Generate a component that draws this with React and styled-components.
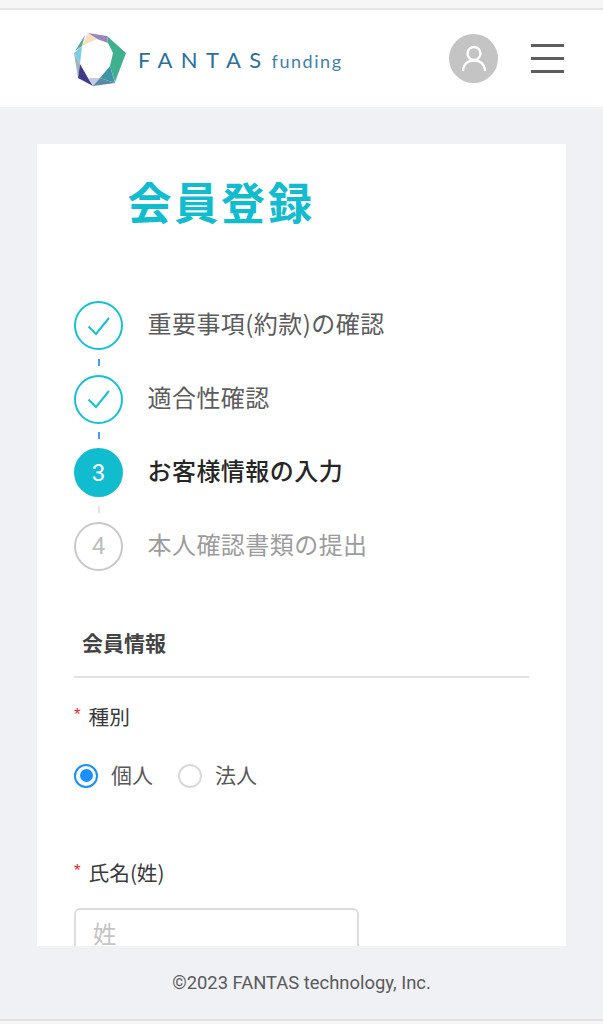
import React from 'react';
import styled, { createGlobalStyle } from 'styled-components';

const Global = createGlobalStyle`
  html, body { margin: 0; padding: 0; background: #eff1f5; }
  * { box-sizing: border-box; }
  body { font-family: "Noto Sans CJK JP", "Noto Sans", sans-serif; }
`;

const Page = styled.div`
  width: 603px; height: 1024px; overflow: hidden;
  display: flex; flex-direction: column; background: #eff1f5;
`;
const BrowserStrip = styled.div`
  height: 10px; flex: none; background: #f6f6f6; border-bottom: 2px solid #e4e4e4;
`;
const Header = styled.header`
  height: 97px; flex: none; background: #fff;
  display: flex; align-items: center; padding: 0 39px 0 72px;
`;
const Logo = styled.div`display: flex; align-items: center; flex: 1;`;
const Wordmark = styled.span`
  margin-left: 10px; margin-top: 2px; color: #2b709c; font-family: Lato, sans-serif;
  font-size: 22px; letter-spacing: 8.4px; font-weight: 400; white-space: nowrap;
`;
const Sub = styled.span`
  margin-left: 2px; margin-top: 4px; color: #3f82a8; font-family: Lato, sans-serif;
  font-size: 18px; letter-spacing: 1.55px; white-space: nowrap;
`;
const Avatar = styled.div`
  width: 49px; height: 49px; border-radius: 50%; background: #c4c4c4;
  display: flex; align-items: center; justify-content: center; margin-right: 33px;
`;
const Burger = styled.div`
  width: 33px; display: flex; flex-direction: column; gap: 10px;
`;
const BurgerLine = styled.span`height: 3px; background: #5e5e5e; display: block;`;

const Main = styled.main`flex: none; padding: 37px 37px 0; display: flex;`;
const Card = styled.section`
  width: 529px; height: 802px; background: #fff; overflow: hidden; padding: 0 37px 0 37px;
`;
const Title = styled.h1`
  margin: 29px 0 0 53.5px; color: #12bccf; font-size: 44px; font-weight: 700; line-height: 56px;
  letter-spacing: 2.8px;
`;
const Steps = styled.ol`list-style: none; margin: 72px 0 0; padding: 0; display: flex; flex-direction: column; gap: 24.67px;`;
const Step = styled.li`
  display: flex; align-items: center; gap: 24.5px; height: 49px; position: relative;
`;
const Connector = styled.span`
  position: absolute; left: 24px; top: -16px; width: 2px; height: 7px;
  background: ${p => p.$color};
`;
const Circle = styled.div`
  width: 49px; height: 49px; border-radius: 50%; flex: none;
  display: flex; align-items: center; justify-content: center;
  font-family: Roboto, sans-serif; font-size: 24px;
  border: ${p => p.$variant === 'todo' ? '2px solid #c9c9c9' : p.$variant === 'done' ? '2px solid #17c0d3' : 'none'};
  background: ${p => p.$variant === 'current' ? '#12bccf' : '#fff'};
  color: ${p => p.$variant === 'current' ? '#fff' : '#bdbdbd'};
`;
const StepLabel = styled.span`
  font-size: 24px; letter-spacing: 0.45px; line-height: 32px; white-space: nowrap; margin-bottom: 5px;
  color: ${p => p.$variant === 'current' ? '#262626' : p.$variant === 'todo' ? '#9c9c9c' : '#5c5c5c'};
  font-weight: ${p => p.$variant === 'current' ? 500 : 400};
`;
const SectionHead = styled.h2`
  margin: 56px 0 0; padding: 0 0 19px 8px; border-bottom: 2px solid #e2e2e2;
  font-size: 21px; line-height: 30px; font-weight: 700; color: #444;
`;
const FieldLabel = styled.div`
  display: flex; align-items: center; font-size: 20.7px; line-height: 30px; color: #3a3a3a;
  margin-top: ${p => p.$top}px;
`;
const Req = styled.span`
  color: #f5222d; width: 14.5px; font-size: 17px; font-family: "Liberation Sans", sans-serif; line-height: 1;
  position: relative; top: -1px;
`;
const Radios = styled.div`display: flex; align-items: center; margin-top: 30px; height: 30px;`;
const RadioItem = styled.label`display: inline-flex; align-items: center; margin-right: 25px;`;
const RadioDot = styled.span`
  width: 24px; height: 24px; border-radius: 50%; flex: none; background: #fff;
  border: 2px solid ${p => p.$on ? '#1890ff' : '#d9d9d9'};
  display: flex; align-items: center; justify-content: center;
  &::after {
    content: ''; width: 13px; height: 13px; border-radius: 50%;
    background: ${p => p.$on ? '#1890ff' : 'transparent'};
  }
`;
const RadioText = styled.span`margin: 0 0 3px 13px; font-size: 21px; line-height: 30px; color: #585858;`;
const TextBox = styled.div`
  width: 285px; height: 54px; margin-top: 21px; border: 2px solid #dcdcdc; border-radius: 6px;
  padding: 6px 17px; font-size: 23.5px; line-height: 34px; color: #c4c4c4;
`;
const Footer = styled.footer`
  height: 75px; flex: none; border-bottom: 2px solid #e0e0e0; text-align: center;
  font-family: Roboto, sans-serif; font-size: 18.4px; color: #5a5a5a; padding-top: 25px; line-height: 24px;
`;
const BottomStrip = styled.div`flex: 1; background: #f6f6f6;`;

const Check = () => (
  <svg width="26" height="26" viewBox="0 0 26 26" fill="none" stroke="#17c0d3" strokeWidth="2">
    <path d="M2.5 13.5 L10 21 L23 5" />
  </svg>
);

const FantasMark = () => (
  <svg width="56" height="56" viewBox="72 30 56 56">
    <path d="M107 35L126 52L115 81L110 65L113 52L108 42Z" fill="#3fb08e" />
    <path d="M88 32L107 35L108 42L97 38Z" fill="#9b85bd" />
    <path d="M88 32L97 38L82 45Z" fill="#f8dfc0" />
    <path d="M85 34L82 45L75 50Z" fill="#5da79f" />
    <path d="M74 52L82 45L80 63Z" fill="#79cde2" />
    <path d="M74 52L80 63L78 77Z" fill="#9fb4bd" />
    <path d="M80 63L88 77L93 85L78 77Z" fill="#3f3a8c" />
    <path d="M88 77L100 77L93 85Z" fill="#c4cbe2" />
    <path d="M93 85L100 77L115 82Z" fill="#5b8aa8" />
    <path d="M100 77L110 65L115 82Z" fill="#3e95a5" />
  </svg>
);

const UserIcon = () => (
  <svg width="26" height="28" viewBox="0 0 26 28" fill="none" stroke="#fff" strokeWidth="2.4" strokeLinecap="round">
    <circle cx="13" cy="8.5" r="6.5" />
    <path d="M2 25 C3 18 8 15.5 13 15.5 C18 15.5 23 18 24 25" />
  </svg>
);

const steps = [
  { variant: 'done', text: '重要事項(約款)の確認' },
  { variant: 'done', text: '適合性確認', line: '#4a9cf0' },
  { variant: 'current', text: 'お客様情報の入力', mark: '3', line: '#4a9cf0' },
  { variant: 'todo', text: '本人確認書類の提出', mark: '4', line: '#e4e4e4' },
];

export default function App() {
  return (
    <Page>
      <Global />
      <BrowserStrip />
      <Header>
        <Logo>
          <FantasMark />
          <Wordmark>FANTAS</Wordmark>
          <Sub>funding</Sub>
        </Logo>
        <Avatar><UserIcon /></Avatar>
        <Burger><BurgerLine /><BurgerLine /><BurgerLine /></Burger>
      </Header>
      <Main>
        <Card>
          <Title>会員登録</Title>
          <Steps>
            {steps.map(s => (
              <Step key={s.text}>
                {s.line && <Connector $color={s.line} />}
                <Circle $variant={s.variant}>{s.mark || <Check />}</Circle>
                <StepLabel $variant={s.variant}>{s.text}</StepLabel>
              </Step>
            ))}
          </Steps>
          <SectionHead>会員情報</SectionHead>
          <FieldLabel $top={23}><Req>*</Req>種別</FieldLabel>
          <Radios>
            <RadioItem><RadioDot $on /><RadioText>個人</RadioText></RadioItem>
            <RadioItem><RadioDot /><RadioText>法人</RadioText></RadioItem>
          </Radios>
          <FieldLabel $top={66}><Req>*</Req>氏名(姓)</FieldLabel>
          <TextBox>姓</TextBox>
        </Card>
      </Main>
      <Footer>©2023 FANTAS technology, Inc.</Footer>
      <BottomStrip />
    </Page>
  );
}
